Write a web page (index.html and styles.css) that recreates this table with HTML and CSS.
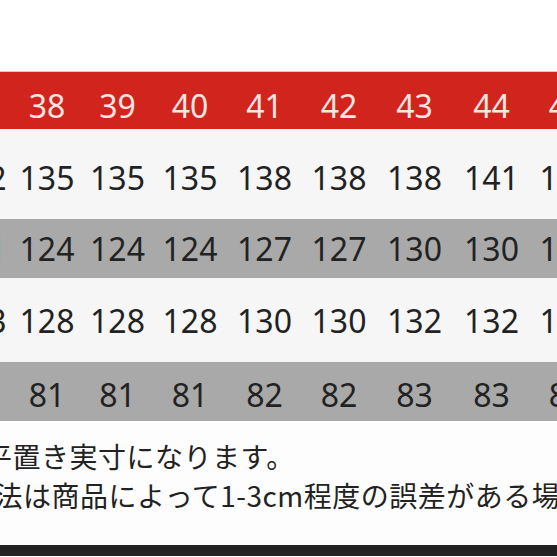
FILE: index.html
```html
<!DOCTYPE html>
<html lang="ja">
<head>
<meta charset="utf-8">
<title>サイズ表</title>
<link rel="stylesheet" href="styles.css">
</head>
<body>
<div class="page">
  <div class="top-space"></div>
  <div class="chart">
    <div class="row head">
      <span>37</span><span>38</span><span>39</span><span>40</span><span>41</span><span>42</span><span>43</span><span>44</span><span>45</span>
    </div>
    <div class="row light first">
      <span>132</span><span>135</span><span>135</span><span>135</span><span>138</span><span>138</span><span>138</span><span>141</span><span>141</span>
    </div>
    <div class="row shade">
      <span>121</span><span>124</span><span>124</span><span>124</span><span>127</span><span>127</span><span>130</span><span>130</span><span>133</span>
    </div>
    <div class="row light second">
      <span>123</span><span>128</span><span>128</span><span>128</span><span>130</span><span>130</span><span>132</span><span>132</span><span>134</span>
    </div>
    <div class="row shade last">
      <span>81</span><span>81</span><span>81</span><span>81</span><span>82</span><span>82</span><span>83</span><span>83</span><span>84</span>
    </div>
  </div>
  <div class="notes">
    <p class="note note-a">平置き実寸になります。</p>
    <p class="note note-b">寸法は商品によって1-3cm程度の誤差がある場合があります。</p>
  </div>
  <div class="bottom-bar"></div>
</div>
</body>
</html>
```
FILE: styles.css
```css
html, body {
  margin: 0;
  padding: 0;
  background: #ffffff;
}
body {
  width: 557px;
  height: 557px;
  overflow: hidden;
}
.page {
  width: 557px;
  height: 557px;
  overflow: hidden;
  display: flex;
  flex-direction: column;
  font-family: "Noto Sans", "Noto Sans CJK JP", sans-serif;
}
.top-space {
  height: 71px;
  background: #ffffff;
  flex: none;
}
.chart {
  flex: none;
  overflow: hidden;
  width: 557px;
}
.row {
  display: grid;
  grid-template-columns: 66px 70px 71px 74px 75px 74px 77px 77px 74px;
  margin-left: -54px;
  width: 658px;
  align-items: center;
  font-size: 32px;
  line-height: 1;
  color: #222222;
}
.row span {
  text-align: center;
  white-space: nowrap;
}
.head {
  height: 58px;
  box-sizing: border-box;
  padding-top: 11px;
  background: #d0241d;
  border-top: 1px solid #f2bdb8;
  color: #fbe6e3;
}
.light {
  background: #f6f6f6;
}
.shade {
  background: #a9a9a9;
}
.first {
  height: 90px;
  box-sizing: border-box;
  padding-top: 8px;
}
.shade {
  height: 59px;
}
.second {
  height: 84px;
  box-sizing: border-box;
  padding-top: 2px;
}
.last {
  box-sizing: border-box;
  padding-top: 6px;
}
.notes {
  flex: none;
  height: 124px;
  box-sizing: border-box;
  padding-top: 16px;
  background: #fdfdfd;
  font-family: "Noto Sans CJK JP", sans-serif;
  font-size: 28px;
  letter-spacing: 0.5px;
  line-height: 39px;
  color: #222222;
  white-space: nowrap;
}
.note {
  margin: 0;
}
.note-a {
  margin-left: -16px;
}
.note-b {
  margin-left: -34px;
}
.bottom-bar {
  flex: none;
  height: 11px;
  background: #222222;
}
```
